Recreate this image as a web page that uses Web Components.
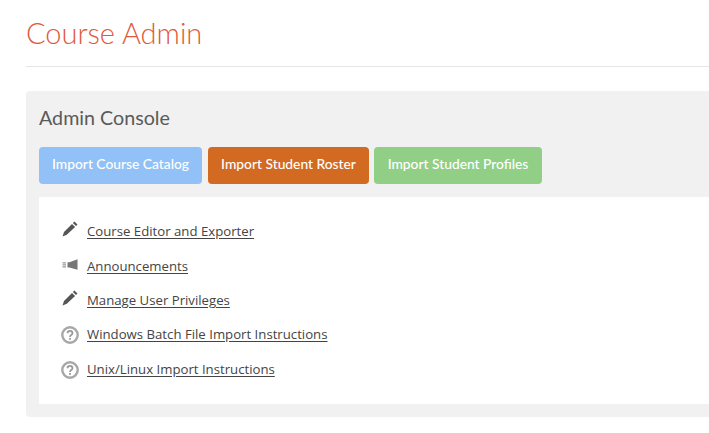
<!DOCTYPE html>
<html lang="en">
<head>
<meta charset="utf-8">
<title>Course Admin</title>
<style>
    html, body { margin: 0; background: #fff; overflow: hidden; }
</style>
</head>
<body>
<template id="page-title-template">
    <style>
        :host {
            display: block;
            margin: 0 0 24px 26px;
            height: 66px;
            border-bottom: 1px solid #e6e6e6;
            box-sizing: content-box;
        }
        h1 {
            margin: 0;
            padding-top: 14px;
            font: 300 29px/38px "Lato", sans-serif;
            color: #e0593c;
        }
    </style>
    <h1><slot></slot></h1>
</template>

<template id="admin-console-template">
    <style>
        :host {
            display: block;
            margin: 0 0 0 26px;
            padding: 13px 0 13px 13px;
            height: 300px;
            background: #f1f1f1;
            border-radius: 4px 0 0 4px;
        }
        h2 {
            margin: 0 0 16px;
            font: 400 19.7px/27px "Lato", sans-serif;
            color: #5a5a5a;
        }
        .buttons {
            display: flex;
            margin-bottom: 13px;
        }
        .body {
            display: flex;
            flex-direction: column;
            height: 207px;
            padding: 17px 22px 0;
            background: #fff;
            box-sizing: border-box;
        }
    </style>
    <h2 id="heading"></h2>
    <div class="buttons"><slot name="buttons"></slot></div>
    <div class="body"><slot></slot></div>
</template>

<template id="import-button-template">
    <style>
        :host {
            display: block;
            box-sizing: border-box;
            height: 37px;
            margin-right: var(--gap, 6px);
            border-radius: 4px;
            background: var(--bg);
            color: #fff;
            font: 500 13.8px/34px "Lato", sans-serif;
            text-align: center;
        }
    </style>
    <slot></slot>
</template>

<template id="admin-link-template">
    <style>
        :host {
            display: flex;
            align-items: center;
            height: var(--row, 34px);
            font: 400 13.2px/18px "Open Sans", sans-serif;
            color: #444;
        }
        .icon {
            display: flex;
            justify-content: center;
            width: 18px;
            margin-right: 8px;
        }
        svg { display: block; }
        a {
            color: inherit;
            text-decoration: underline;
            text-underline-offset: 2px;
        }
    </style>
    <span class="icon" id="icon"></span>
    <a href="#"><slot></slot></a>
</template>

<course-title>Course Admin</course-title>
<admin-console heading="Admin Console">
    <import-button slot="buttons" style="--bg:#92c1f7;width:163px">Import Course Catalog</import-button>
    <import-button slot="buttons" style="--bg:#d36a22;width:161px;--gap:5px">Import Student Roster</import-button>
    <import-button slot="buttons" style="--bg:#90cf85;width:168px">Import Student Profiles</import-button>
    <admin-link icon="pencil">Course Editor and Exporter</admin-link>
    <admin-link icon="bullhorn" style="--row:35px">Announcements</admin-link>
    <admin-link icon="pencil">Manage User Privileges</admin-link>
    <admin-link icon="help">Windows Batch File Import Instructions</admin-link>
    <admin-link icon="help" style="--row:35px">Unix/Linux Import Instructions</admin-link>
</admin-console>

<script>
const ICONS = {
    pencil: `<svg width="16" height="16" viewBox="0 0 16 16" style="margin-top:-4px">
        <path fill="#555" d="M12.400 0.500l3.100 3-1.500 1.600-3.100-3zM10 3l3.100 3-8.300 7.800-4.300 1.700 1.500-4.400z"/></svg>`,
    bullhorn: `<svg width="16" height="12" viewBox="0 0 16 12" style="margin-top:-2px">
        <path fill="#777" d="M15.500 0.200v10.600l-8-2.400h-2v-5.200h2z"/>
        <path fill="#999" d="M0.500 3.200h3.500v1.200h-3.500zM0.500 5.200h3.500v1.200h-3.500zM0.500 7.200h3.500v1.200h-3.500z"/></svg>`,
    help: `<svg width="18" height="18" viewBox="0 0 18 18" style="margin-top:2px">
        <circle cx="9" cy="9" r="7.700" fill="none" stroke="#a8a8a8" stroke-width="2.400"/>
        <path fill="none" stroke="#9a9a9a" stroke-width="1.800" d="M6.500 7.200c0-3.200 5-3.200 5 0 0 1.900-2.500 1.800-2.500 3.700"/>
        <rect x="8.100" y="12" width="1.800" height="1.800" fill="#9a9a9a"/></svg>`
};

class ShadowBase extends HTMLElement {
    constructor(templateId) {
        super();
        this.attachShadow({mode: 'open'});
        const template = document.getElementById(templateId);
        this.shadowRoot.appendChild(template.content.cloneNode(true));
    }
}

class CourseTitle extends ShadowBase {
    constructor() {
        super('page-title-template');
    }
}
customElements.define('course-title', CourseTitle);

class AdminConsole extends ShadowBase {
    constructor() {
        super('admin-console-template');
    }

    connectedCallback() {
        this.shadowRoot.getElementById('heading').textContent = this.getAttribute('heading');
    }
}
customElements.define('admin-console', AdminConsole);

class ImportButton extends ShadowBase {
    constructor() {
        super('import-button-template');
    }
}
customElements.define('import-button', ImportButton);

class AdminLink extends ShadowBase {
    constructor() {
        super('admin-link-template');
    }

    connectedCallback() {
        this.shadowRoot.getElementById('icon').innerHTML = ICONS[this.getAttribute('icon')];
    }
}
customElements.define('admin-link', AdminLink);
</script>
</body>
</html>
